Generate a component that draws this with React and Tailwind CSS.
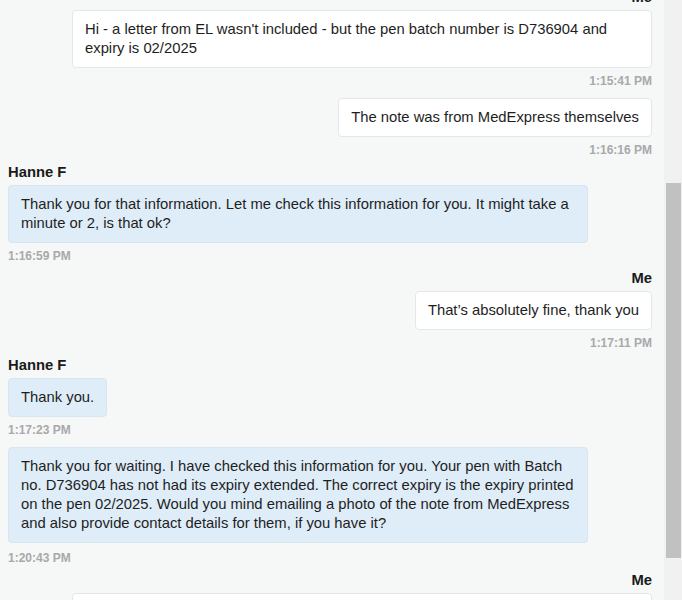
import React from 'react';

const messages = [
  { me: true, name: 'Me', text: "Hi - a letter from EL wasn't included - but the pen batch number is D736904 and expiry is 02/2025", time: '1:15:41 PM' },
  { me: true, text: 'The note was from MedExpress themselves', time: '1:16:16 PM' },
  { me: false, name: 'Hanne F', text: 'Thank you for that information. Let me check this information for you. It might take a minute or 2, is that ok?', time: '1:16:59 PM' },
  { me: true, name: 'Me', text: 'That’s absolutely fine, thank you', time: '1:17:11 PM' },
  { me: false, name: 'Hanne F', text: 'Thank you.', time: '1:17:23 PM' },
  {
    me: false,
    text: 'Thank you for waiting. I have checked this information for you. Your pen with Batch no. D736904 has not had its expiry extended. The correct expiry is the expiry printed on the pen 02/2025. Would you mind emailing a photo of the note from MedExpress and also provide contact details for them, if you have it?',
    time: '1:20:43 PM',
    long: true,
  },
  { me: true, name: 'Me', text: 'Yes of course, I will email a photo of the note over to you shortly along with their details', time: '' },
];

const Message = ({ msg }) => (
  <div className={`flex flex-col ${msg.me ? 'items-end' : 'items-start'} ${msg.name ? '' : 'mt-[10px]'}`}>
    {msg.name && (
      <div className="mt-[5px] mb-[3px] h-[20px] text-[14.8px] leading-[20px] font-bold text-[#1a1a1a]">{msg.name}</div>
    )}
    <div
      className={`max-w-[580px] rounded-[4px] border px-3 py-[9px] text-[14.8px] leading-[19px] text-[#1e1e1e] ${
        msg.me ? 'bg-white border-[#e4e7ea]' : 'bg-[#deedf8] border-[#d7e6f1]'
      }`}
    >
      {msg.text}
    </div>
    {msg.time && (
      <div className={`h-[14px] text-[12px] leading-[14px] font-bold text-[#a8a9ab] ${msg.long ? 'mt-[8px]' : 'mt-[6px]'}`}>
        {msg.time}
      </div>
    )}
  </div>
);

export default function App() {
  return (
    <div className="flex h-[600px] w-full overflow-hidden" style={{ fontFamily: '"Liberation Sans", Arial, sans-serif' }}>
      <div className="flex-1 bg-[#f6f7f7] pl-2 pr-3">
        <div className="-mt-[18px] flex flex-col">
          {messages.map((m, i) => (
            <Message key={i} msg={m} />
          ))}
        </div>
      </div>
      <div className="w-[18px] shrink-0 bg-[#f1f1f1] pl-[2px] pr-[1px]">
        <div className="mt-[183px] h-[375px] bg-[#c1c1c1]" />
      </div>
    </div>
  );
}
